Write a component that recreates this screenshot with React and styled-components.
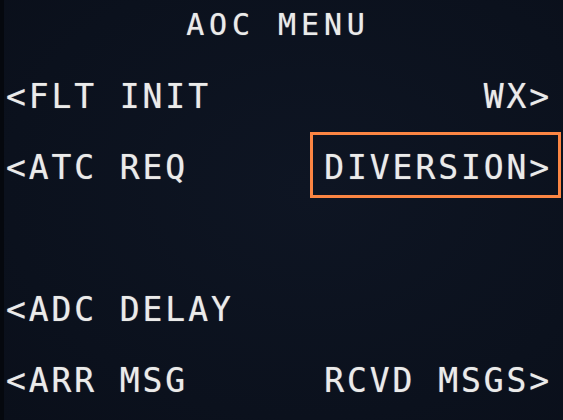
import React from "react";
import styled, { createGlobalStyle } from "styled-components";

const Global = createGlobalStyle`
  html, body {
    margin: 0;
    padding: 0;
    background: #0b111c;
  }
  #root {
    width: 563px;
    height: 420px;
  }
`;

const Screen = styled.div`
  box-sizing: border-box;
  width: 563px;
  height: 420px;
  overflow: hidden;
  background: radial-gradient(ellipse at 55% 45%, #0e1523 0%, #0b111d 70%, #0a0f1a 100%);
  border-left: 4px solid #05080e;
  display: flex;
  flex-direction: column;
  padding: 0 2px 0 2px;
  font-family: "DejaVu Sans Mono", "Liberation Mono", monospace;
  color: #ebebea;
  text-shadow: 0 0 1px rgba(255, 255, 255, 0.55);
`;

const Title = styled.div`
  height: 61px;
  display: flex;
  justify-content: center;
  align-items: flex-start;
  padding-top: 9px;
  padding-right: 11px;
  box-sizing: border-box;
  font-size: 30px;
  line-height: 32px;
  letter-spacing: 4.9px;
`;

const Row = styled.div`
  height: 71px;
  display: flex;
  justify-content: space-between;
  align-items: center;
`;

const Label = styled.span`
  font-size: 33px;
  line-height: 33px;
  letter-spacing: 2.9px;
  white-space: pre;
`;

const LeftKey = styled(Label)`
  padding-left: 0;
`;

const RightKey = styled(Label)`
  box-sizing: border-box;
  height: 66px;
  margin-bottom: 6px;
  display: flex;
  align-items: center;
  padding: 6px 6px 0 11px;
  border: 3px solid ${(p) => (p.$selected ? "#fb8543" : "transparent")};
`;

const rows = [
  { left: "<FLT INIT", right: "WX>" },
  { left: "<ATC REQ", right: "DIVERSION>", selected: true },
  { left: "", right: "" },
  { left: "<ADC DELAY", right: "" },
  { left: "<ARR MSG", right: "RCVD MSGS>" },
];

export default function App() {
  return (
    <>
      <Global />
      <Screen>
        <Title>AOC MENU</Title>
        {rows.map((r, i) => (
          <Row key={i}>
            <LeftKey>{r.left}</LeftKey>
            {r.right ? <RightKey $selected={r.selected}>{r.right}</RightKey> : null}
          </Row>
        ))}
      </Screen>
    </>
  );
}
